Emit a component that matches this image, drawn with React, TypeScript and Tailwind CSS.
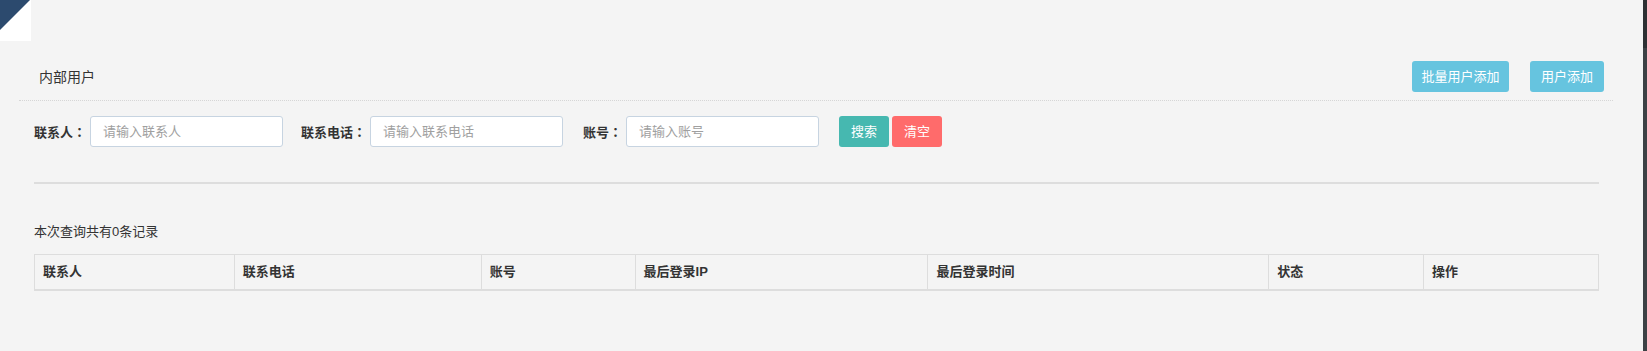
const fields = [
  { label: "联系人", placeholder: "请输入联系人", gap: "ml-0" },
  { label: "联系电话", placeholder: "请输入联系电话", gap: "ml-[18px]" },
  { label: "账号", placeholder: "请输入账号", gap: "ml-[20px]" },
];

const columns = [
  { title: "联系人", width: "w-[200px]" },
  { title: "联系电话", width: "w-[247px]" },
  { title: "账号", width: "w-[154px]" },
  { title: "最后登录IP", width: "w-[293px]" },
  { title: "最后登录时间", width: "w-[341px]" },
  { title: "状态", width: "w-[155px]" },
  { title: "操作", width: "w-[175px]" },
];

const Corner = () => (
  <div className="w-[31px] h-[41px] bg-white">
    <svg width="31" height="31" viewBox="0 0 31 31">
      <polygon points="0,0 30,0 0,30" fill="#2c4a6e" />
    </svg>
  </div>
);

export default function App() {
  return (
    <div className="flex w-full h-[351px] bg-[#f4f4f4] text-[#333] font-['Liberation_Sans','Noto_Sans_CJK_SC',sans-serif]">
      <div className="flex-1 flex flex-col">
        <Corner />

        {/* header */}
        <div className="ml-[19px] mr-[30px] pt-[20px] pb-[8px] flex items-center justify-between border-b border-dotted border-[#d6d6d6]">
          <span className="pl-[20px] text-[14px] leading-[20px] text-[#333]">内部用户</span>
          <div className="flex items-center gap-[21px] pr-[9px]">
            <button className="h-[31px] w-[97px] rounded-[3px] bg-[#66c4df] text-white text-[13px] leading-none">
              批量用户添加
            </button>
            <button className="h-[31px] w-[74px] rounded-[3px] bg-[#66c4df] text-white text-[13px] leading-none">
              用户添加
            </button>
          </div>
        </div>

        {/* search */}
        <div className="ml-[34px] mr-[44px] mt-[15px] flex items-center">
          {fields.map((f) => (
            <div key={f.label} className={`flex items-center ${f.gap}`}>
              <span className="text-[13px] font-bold leading-none text-[#333] mr-[4px]">
                {f.label}
                <span className="font-['Noto_Sans_CJK_TC',sans-serif]">：</span>
              </span>
              <input
                className="w-[193px] h-[31px] rounded-[3px] border border-[#c7d4e1] bg-white px-[12px] text-[13px] placeholder:text-[#a0a0a0] outline-none"
                placeholder={f.placeholder}
              />
            </div>
          ))}
          <button className="ml-[20px] h-[31px] w-[50px] rounded-[3px] bg-[#46b8b0] text-white text-[13px] leading-none">
            搜索
          </button>
          <button className="ml-[3px] h-[31px] w-[50px] rounded-[3px] bg-[#ff6b6b] text-white text-[13px] leading-none">
            清空
          </button>
        </div>

        <div className="ml-[34px] mr-[44px] mt-[35px] h-[2px] bg-[#dddddd]" />

        <div className="ml-[34px] mt-[39px] text-[13px] leading-[18px] text-[#333]">本次查询共有0条记录</div>

        <table className="ml-[34px] mr-[44px] mt-[13px] table-fixed border-collapse">
          <thead>
            <tr className="border-b-2 border-[#dddddd]">
              {columns.map((c) => (
                <th
                  key={c.title}
                  className={`${c.width} h-[35px] border border-[#dddddd] px-[8px] text-left text-[13px] font-bold text-[#333]`}
                >
                  {c.title}
                </th>
              ))}
            </tr>
          </thead>
        </table>
      </div>

      {/* scrollbar */}
      <div className="w-[4px] h-full flex flex-col bg-[#3c4044]">
        <div className="h-[48px] bg-[#2d3033]" />
      </div>
    </div>
  );
}
